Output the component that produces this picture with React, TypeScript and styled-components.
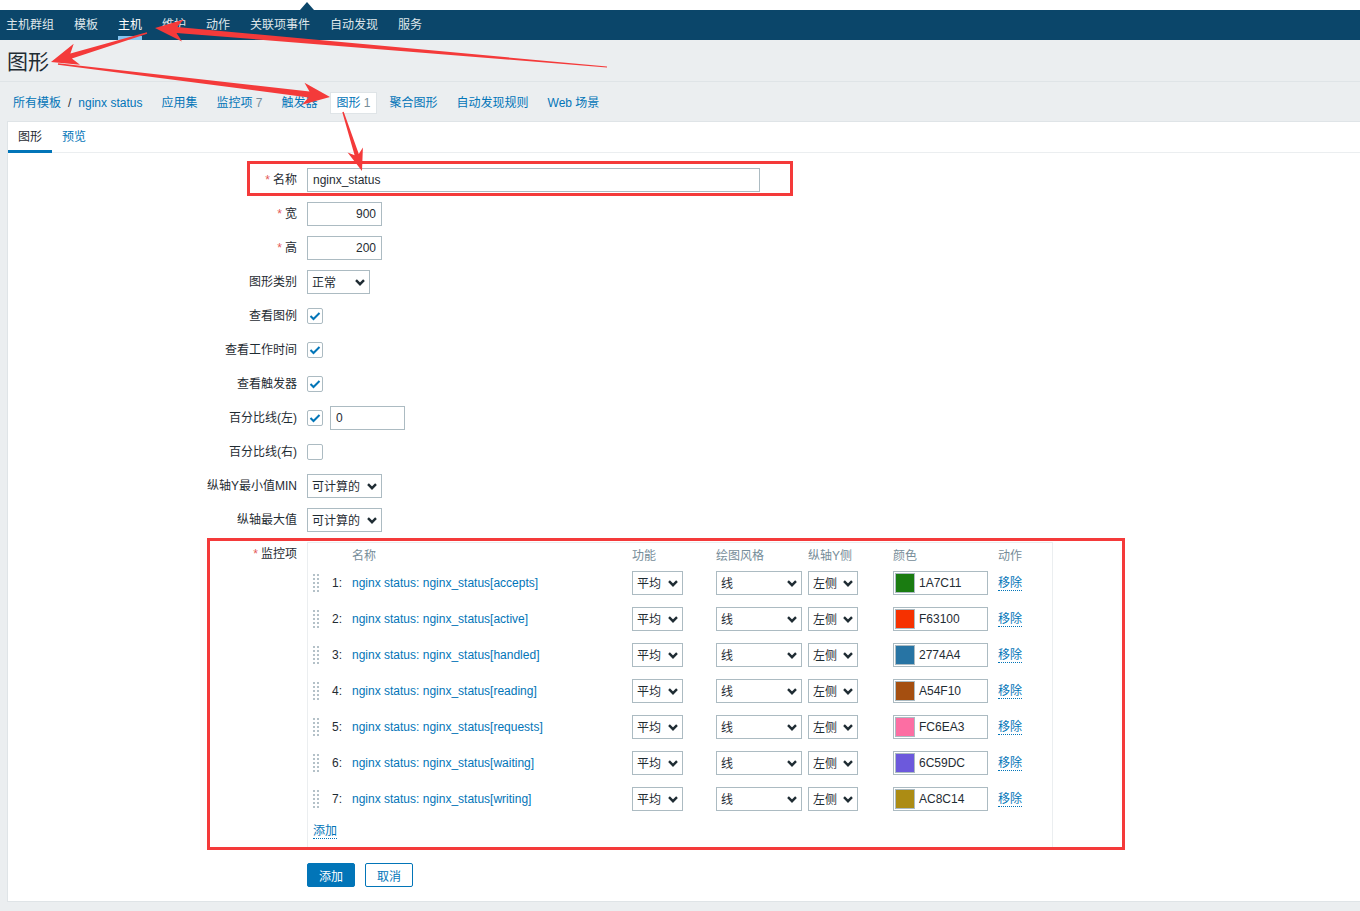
import React from 'react';
import styled, { createGlobalStyle } from 'styled-components';

const GlobalStyle = createGlobalStyle`
  html, body { margin: 0; padding: 0; }
  body {
    background: #ebeef0;
    font-family: "Liberation Sans", Arial, "Noto Sans CJK SC", sans-serif;
    font-size: 12px;
    color: #1f2c33;
  }
  *, *::before, *::after { box-sizing: border-box; }
`;

const Page = styled.div`
  position: relative;
  width: 1360px;
  min-height: 911px;
  overflow: hidden;
`;

const TopStrip = styled.div`
  height: 10px;
  background: #fff;
  display: flex;
  align-items: flex-end;
  padding-left: 300px;
`;

const Notch = styled.div`
  width: 0;
  height: 0;
  border-left: 7px solid transparent;
  border-right: 7px solid transparent;
  border-bottom: 8px solid #0b466a;
`;

const TopNav = styled.nav`
  height: 30px;
  background: #0b466a;
  display: flex;
  align-items: stretch;
  gap: 20px;
  padding-left: 6px;
`;

const NavItem = styled.a<{ $active?: boolean }>`
  display: flex;
  align-items: center;
  line-height: 14px;
  color: ${(p) => (p.$active ? '#ffffff' : '#dfe6ea')};
  text-decoration: none;
  border-top: 4px solid transparent;
  border-bottom: 4px solid ${(p) => (p.$active ? '#84c4ef' : 'transparent')};
`;

const PageHeader = styled.header`
  height: 42px;
  border-bottom: 1px solid #dfe4e7;
  display: flex;
  align-items: center;
  padding: 3px 7px 0;
`;

const Title = styled.h1`
  margin: 0;
  font-size: 21px;
  font-weight: normal;
  line-height: 24px;
  color: #1f2c33;
`;

const SubNav = styled.nav`
  height: 39px;
  display: flex;
  align-items: center;
  gap: 7px;
  padding: 3px 0 0 7px;
`;

const SubItem = styled.div<{ $selected?: boolean }>`
  display: flex;
  align-items: center;
  line-height: 14px;
  padding: 3px 5px;
  border: 1px solid ${(p) => (p.$selected ? '#dfe4e7' : 'transparent')};
  background: ${(p) => (p.$selected ? '#ffffff' : 'transparent')};
  white-space: pre;
`;

const Link = styled.a`
  color: #0275b8;
  text-decoration: none;
`;

const Sep = styled.span`
  margin: 0 7px;
  color: #1f2c33;
`;

const Count = styled.span`
  color: #768d99;
`;

const Panel = styled.main`
  margin-left: 7px;
  background: #fff;
  border: 1px solid #dfe4e7;
  border-right: none;
  padding-bottom: 14px;
`;

const Tabs = styled.div`
  height: 31px;
  border-bottom: 1px solid #ebeef0;
  display: flex;
  align-items: flex-start;
`;

const Tab = styled.a<{ $active?: boolean }>`
  height: 31px;
  margin-bottom: -1px;
  padding: 1px 10px 0;
  display: flex;
  align-items: center;
  line-height: 14px;
  text-decoration: none;
  color: ${(p) => (p.$active ? '#1f2c33' : '#0275b8')};
  border-bottom: 3px solid ${(p) => (p.$active ? '#0275b8' : 'transparent')};
`;

const Form = styled.div`
  display: grid;
  grid-template-columns: 289px auto;
  justify-content: start;
  column-gap: 10px;
  row-gap: 10px;
  padding-top: 15px;
`;

const Label = styled.label<{ $top?: boolean }>`
  display: flex;
  justify-content: flex-end;
  align-items: ${(p) => (p.$top ? 'flex-start' : 'center')};
  min-height: 24px;
  padding-top: ${(p) => (p.$top ? '5px' : '0')};
  line-height: 14px;
  white-space: nowrap;
`;

const Asterisk = styled.span`
  color: #e45959;
  margin-right: 3px;
`;

const Field = styled.div`
  display: flex;
  align-items: center;
  gap: 7px;
  min-height: 24px;
`;

const TextInput = styled.input<{ $w: number; $right?: boolean }>`
  width: ${(p) => p.$w}px;
  height: 24px;
  border: 1px solid #acbbc2;
  border-radius: 0;
  padding: 0 5px;
  margin: 0;
  font-family: inherit;
  font-size: 12px;
  color: #1f2c33;
  background: #fff;
  outline: none;
  text-align: ${(p) => (p.$right ? 'right' : 'left')};
`;

const SelectBox = styled.div<{ $w: number }>`
  width: ${(p) => p.$w}px;
  height: 24px;
  border: 1px solid #acbbc2;
  background: #fff;
  display: flex;
  align-items: center;
  justify-content: space-between;
  padding: 1px 4px 0 4px;
  line-height: 14px;
  color: #1f2c33;
`;

const Chevron = () => (
  <svg width="10" height="7" viewBox="0 0 10 7">
    <path d="M1 1.2 L5 5.2 L9 1.2" fill="none" stroke="#1f2c33" strokeWidth="2.4" />
  </svg>
);

const Select = ({ w, value }: { w: number; value: string }) => (
  <SelectBox $w={w}>
    <span>{value}</span>
    <Chevron />
  </SelectBox>
);

const CheckBox = styled.span`
  width: 16px;
  height: 16px;
  border: 1px solid #acbbc2;
  border-radius: 2px;
  background: #fff;
  display: flex;
  align-items: center;
  justify-content: center;
`;

const Check = ({ on }: { on?: boolean }) => (
  <CheckBox>
    {on && (
      <svg width="12" height="10" viewBox="0 0 12 10">
        <path d="M1.5 5 L4.5 8 L10.5 2" fill="none" stroke="#0275b8" strokeWidth="2" />
      </svg>
    )}
  </CheckBox>
);

const ItemsBox = styled.div`
  width: 746px;
  border: 1px solid #ebeef0;
  padding: 0 5px;
`;

const ItemsGrid = styled.div`
  display: grid;
  grid-template-columns: 19px 20px 280px 84px 92px 85px 105px auto;
`;

const HeadRow = styled(ItemsGrid)`
  height: 22px;
  padding-top: 6px;
  line-height: 14px;
  color: #768d99;
`;

const ItemRow = styled(ItemsGrid)`
  height: 36px;
  align-items: center;
  line-height: 14px;
`;

const Handle = styled.span`
  display: grid;
  grid-template-columns: repeat(2, 2px);
  grid-auto-rows: 2px;
  gap: 2px;
  width: 6px;
`;

const Dot = styled.span`
  background: #b4c1c8;
`;

const Num = styled.span`
  color: #1f2c33;
`;

const ColorBox = styled.div`
  width: 95px;
  height: 24px;
  border: 1px solid #acbbc2;
  display: flex;
  align-items: center;
  gap: 4px;
  padding-left: 1px;
  color: #1f2c33;
`;

const Swatch = styled.span<{ $c: string }>`
  width: 20px;
  height: 20px;
  border: 1px solid #acbbc2;
  background: ${(p) => p.$c};
`;

const DottedLink = styled.a`
  justify-self: start;
  color: #0275b8;
  text-decoration: none;
  line-height: 14px;
  border-bottom: 1px dotted #0275b8;
`;

const AddRow = styled.div`
  padding: 7px 0 8px;
  display: flex;
`;

const Buttons = styled.div`
  display: flex;
  gap: 10px;
  padding-top: 5px;
`;

const Button = styled.button<{ $primary?: boolean }>`
  width: 48px;
  height: 24px;
  padding: 0;
  border: 1px solid #0275b8;
  border-radius: 2px;
  background: ${(p) => (p.$primary ? '#0275b8' : '#fff')};
  color: ${(p) => (p.$primary ? '#fff' : '#0275b8')};
  font-family: inherit;
  font-size: 12px;
`;

const Overlay = styled.svg`
  position: absolute;
  left: 0;
  top: 0;
  pointer-events: none;
`;

type Pt = [number, number];

function arrow(tail: Pt, tip: Pt, headLen: number, headHalf: number, shaftHead: number, shaftTail: number) {
  const dx = tip[0] - tail[0];
  const dy = tip[1] - tail[1];
  const len = Math.hypot(dx, dy);
  const ux = dx / len;
  const uy = dy / len;
  const nx = -uy;
  const ny = ux;
  const bx = tip[0] - ux * headLen;
  const by = tip[1] - uy * headLen;
  const jx = tip[0] - ux * headLen * 0.78;
  const jy = tip[1] - uy * headLen * 0.78;
  const pts: Pt[] = [
    [tail[0] + nx * shaftTail, tail[1] + ny * shaftTail],
    [jx + nx * shaftHead, jy + ny * shaftHead],
    [bx + nx * headHalf, by + ny * headHalf],
    tip,
    [bx - nx * headHalf, by - ny * headHalf],
    [jx - nx * shaftHead, jy - ny * shaftHead],
    [tail[0] - nx * shaftTail, tail[1] - ny * shaftTail],
  ];
  return pts.map((p) => `${p[0].toFixed(1)},${p[1].toFixed(1)}`).join(' ');
}

const navItems = ['主机群组', '模板', '主机', '维护', '动作', '关联项事件', '自动发现', '服务'];

const items = [
  { name: 'accepts', color: '1A7C11' },
  { name: 'active', color: 'F63100' },
  { name: 'handled', color: '2774A4' },
  { name: 'reading', color: 'A54F10' },
  { name: 'requests', color: 'FC6EA3' },
  { name: 'waiting', color: '6C59DC' },
  { name: 'writing', color: 'AC8C14' },
];

const RED = '#f43a3a';

export default function App() {
  return (
    <Page>
      <GlobalStyle />
      <TopStrip>
        <Notch />
      </TopStrip>
      <TopNav>
        {navItems.map((n) => (
          <NavItem key={n} $active={n === '主机'}>
            {n}
          </NavItem>
        ))}
      </TopNav>
      <PageHeader>
        <Title>图形</Title>
      </PageHeader>
      <SubNav>
        <SubItem>
          <Link>所有模板</Link>
          <Sep>/</Sep>
          <Link>nginx status</Link>
        </SubItem>
        <SubItem>
          <Link>应用集</Link>
        </SubItem>
        <SubItem>
          <Link>监控项</Link>
          <Count> 7</Count>
        </SubItem>
        <SubItem>
          <Link>触发器</Link>
        </SubItem>
        <SubItem $selected>
          <Link>图形</Link>
          <Count> 1</Count>
        </SubItem>
        <SubItem>
          <Link>聚合图形</Link>
        </SubItem>
        <SubItem>
          <Link>自动发现规则</Link>
        </SubItem>
        <SubItem>
          <Link>Web 场景</Link>
        </SubItem>
      </SubNav>
      <Panel>
        <Tabs>
          <Tab $active>图形</Tab>
          <Tab>预览</Tab>
        </Tabs>
        <Form>
          <Label>
            <Asterisk>*</Asterisk>名称
          </Label>
          <Field>
            <TextInput $w={453} defaultValue="nginx_status" readOnly />
          </Field>

          <Label>
            <Asterisk>*</Asterisk>宽
          </Label>
          <Field>
            <TextInput $w={75} $right defaultValue="900" readOnly />
          </Field>

          <Label>
            <Asterisk>*</Asterisk>高
          </Label>
          <Field>
            <TextInput $w={75} $right defaultValue="200" readOnly />
          </Field>

          <Label>图形类别</Label>
          <Field>
            <Select w={63} value="正常" />
          </Field>

          <Label>查看图例</Label>
          <Field>
            <Check on />
          </Field>

          <Label>查看工作时间</Label>
          <Field>
            <Check on />
          </Field>

          <Label>查看触发器</Label>
          <Field>
            <Check on />
          </Field>

          <Label>百分比线(左)</Label>
          <Field>
            <Check on />
            <TextInput $w={75} defaultValue="0" readOnly />
          </Field>

          <Label>百分比线(右)</Label>
          <Field>
            <Check />
          </Field>

          <Label>纵轴Y最小值MIN</Label>
          <Field>
            <Select w={75} value="可计算的" />
          </Field>

          <Label>纵轴最大值</Label>
          <Field>
            <Select w={75} value="可计算的" />
          </Field>

          <Label $top>
            <Asterisk>*</Asterisk>监控项
          </Label>
          <ItemsBox>
            <HeadRow>
              <span />
              <span />
              <span>名称</span>
              <span>功能</span>
              <span>绘图风格</span>
              <span>纵轴Y侧</span>
              <span>颜色</span>
              <span>动作</span>
            </HeadRow>
            {items.map((it, i) => (
              <ItemRow key={it.name}>
                <Handle>
                  {Array.from({ length: 10 }).map((_, k) => (
                    <Dot key={k} />
                  ))}
                </Handle>
                <Num>{i + 1}:</Num>
                <Link>nginx status: nginx_status[{it.name}]</Link>
                <Select w={51} value="平均" />
                <Select w={86} value="线" />
                <Select w={50} value="左侧" />
                <ColorBox>
                  <Swatch $c={`#${it.color}`} />
                  <span>{it.color}</span>
                </ColorBox>
                <DottedLink>移除</DottedLink>
              </ItemRow>
            ))}
            <AddRow>
              <DottedLink>添加</DottedLink>
            </AddRow>
          </ItemsBox>

          <span />
          <Buttons>
            <Button $primary>添加</Button>
            <Button>取消</Button>
          </Buttons>
        </Form>
      </Panel>

      <Overlay width="1360" height="911" viewBox="0 0 1360 911">
        <rect x="248.5" y="162.5" width="543" height="32" fill="none" stroke={RED} strokeWidth="3" />
        <rect x="208.5" y="539.5" width="915" height="309" fill="none" stroke={RED} strokeWidth="3" />
        <polygon points={arrow([607, 67], [155, 28], 28, 11, 3, 0.5)} fill={RED} />
        <polygon points={arrow([147, 33], [51, 62], 27, 11, 2.6, 0.8)} fill={RED} />
        <polygon points={arrow([58, 64], [330, 97], 27, 11, 3, 0.8)} fill={RED} />
        <polygon points={arrow([343, 112], [362, 171], 22, 8, 2.2, 0.7)} fill={RED} />
      </Overlay>
    </Page>
  );
}
